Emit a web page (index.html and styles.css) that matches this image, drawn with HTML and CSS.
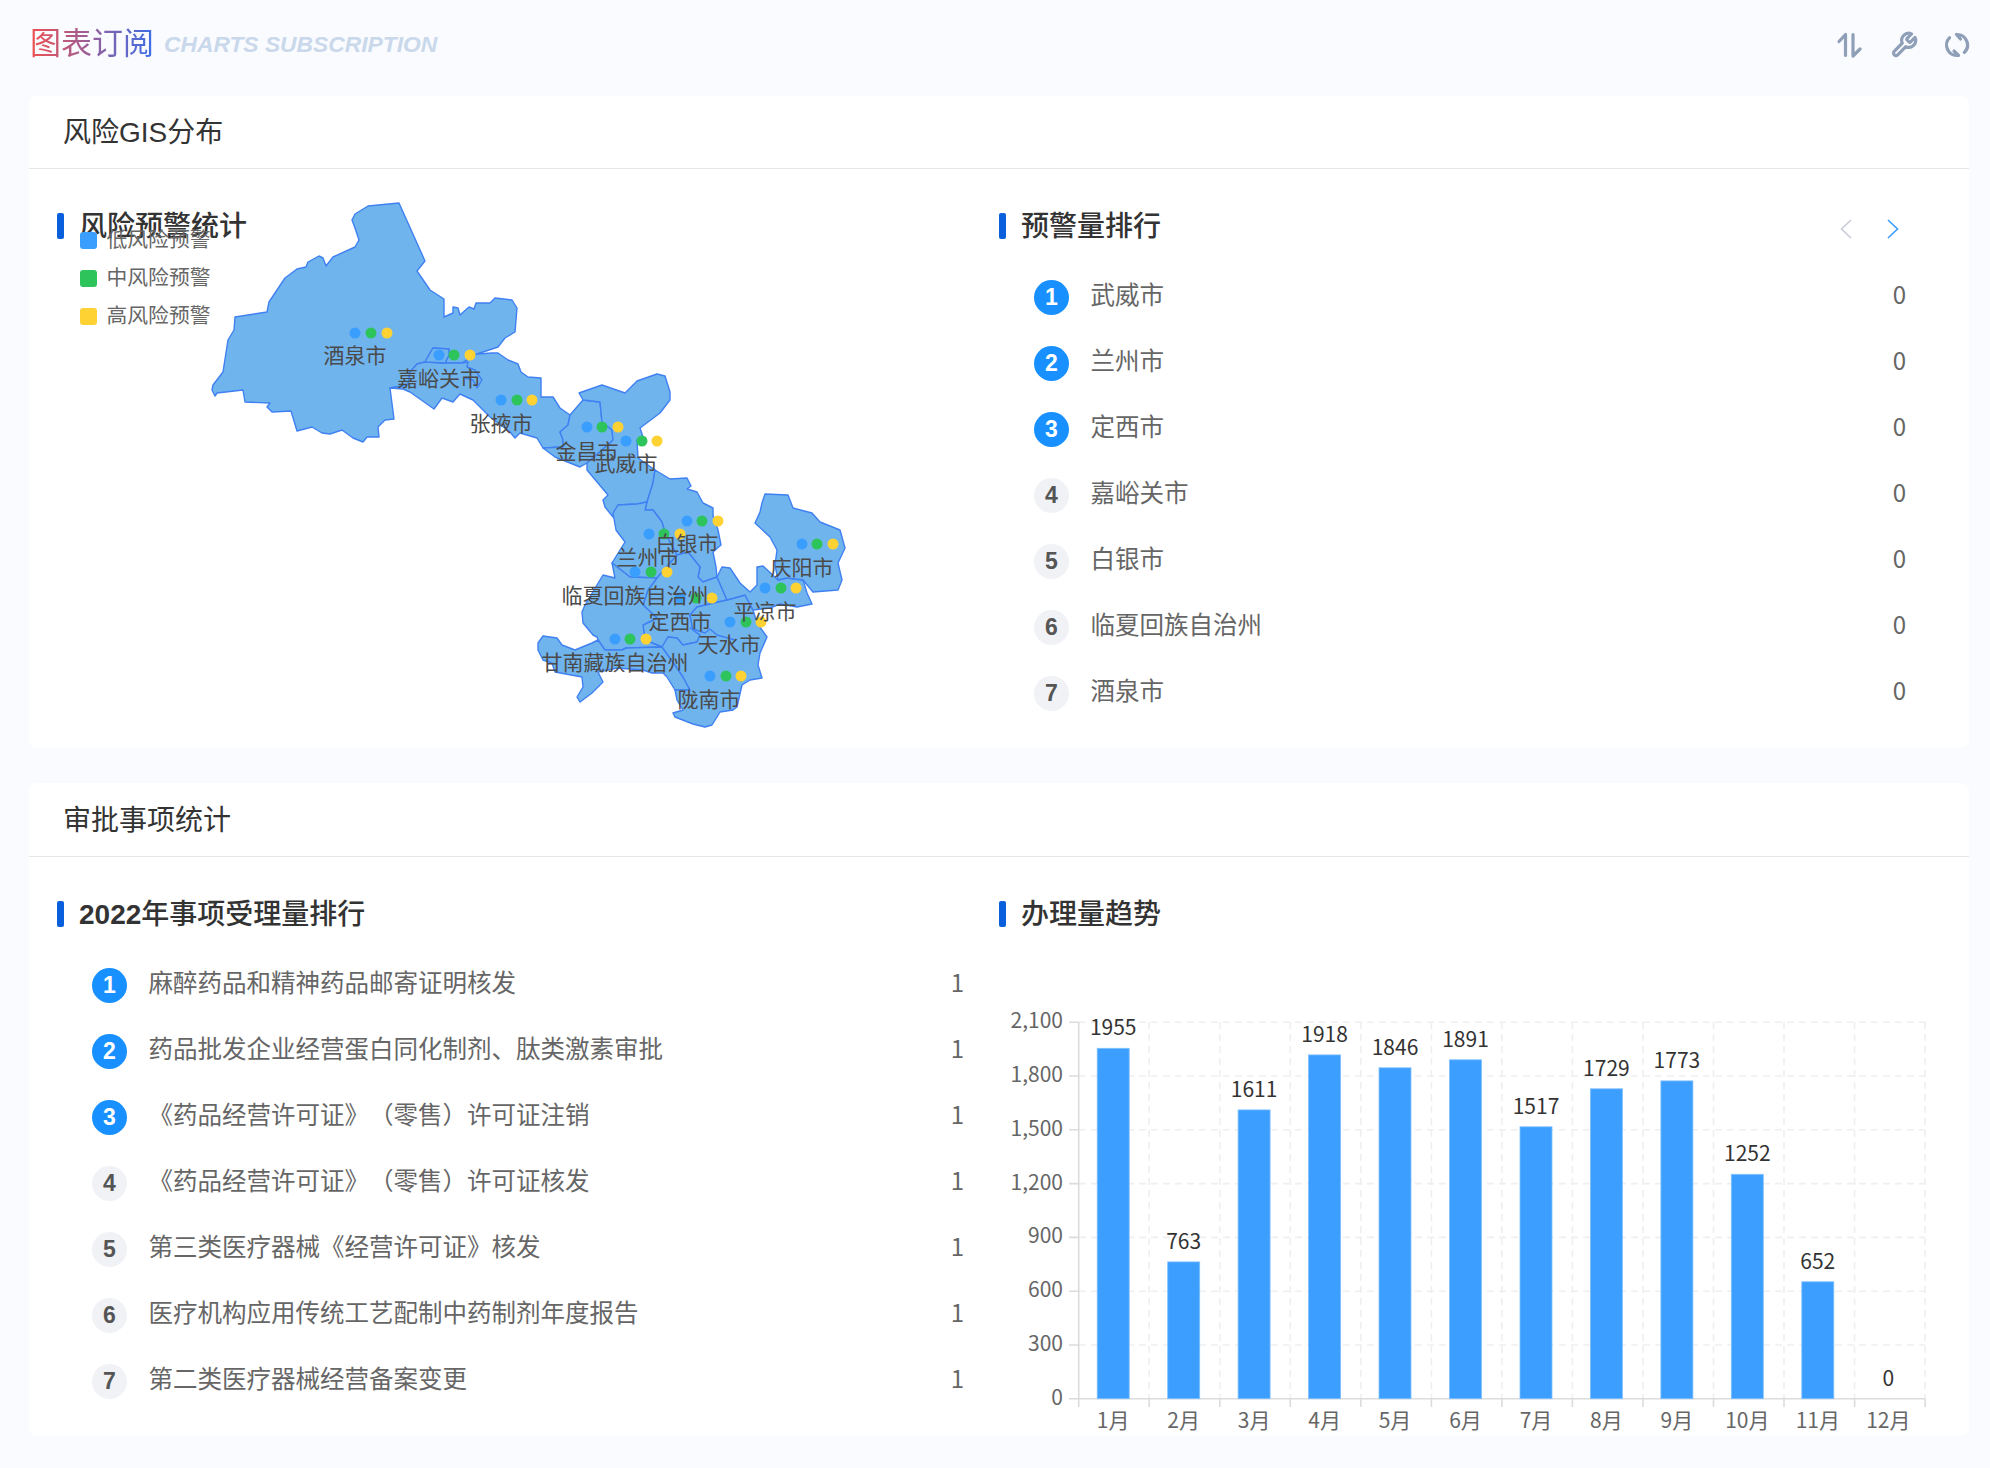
FILE: index.html
```html
<!DOCTYPE html>
<html lang="zh-CN">
<head>
<meta charset="utf-8">
<title>图表订阅</title>
<link rel="stylesheet" href="styles.css">
</head>
<body>
<div class="page">
  <header class="topbar">
    <div class="brand">
      <h1 class="brand-cn">图表订阅</h1>
      <span class="brand-en">CHARTS SUBSCRIPTION</span>
    </div>
    <div class="tools">
      <svg class="tool" viewBox="0 0 26 26"><path d="M3 9.5 L9.5 2.5 V23.5"/><path d="M24 17 L17 24 V2.5"/></svg>
      <svg class="tool tool-wrench" viewBox="0 0 24 24"><path d="M14.7 6.3a1 1 0 0 0 0 1.4l1.6 1.6a1 1 0 0 0 1.4 0l3.77-3.77a6 6 0 0 1-7.94 7.94l-6.91 6.91a2.12 2.12 0 0 1-3-3l6.91-6.91a6 6 0 0 1 7.94-7.94l-3.76 3.76z"/></svg>
      <svg class="tool" viewBox="0 0 26 26"><path d="M12.5 2.5A10.5 10.5 0 0 1 20.4 20.4M12.5 2.5L16.5 7"/><path d="M14.5 23.4A10.5 10.5 0 0 1 5.6 5.6M14.5 23.4L10 19"/></svg>
    </div>
  </header>

  <section class="card">
    <h2 class="card-head">风险GIS分布</h2>
    <div class="card-body">
      <div class="col">
        <div class="sec-title"><i class="bar"></i><span>风险预警统计</span></div>
        <svg class="map" viewBox="57 169 942 579">
          <g class="regions">
            <polygon points="399,203 425,261 417,271 430,290 444,299 444,317 453,313 453,307 458,308 460,315 469,307 474,309 476,303 490,303 495,298 512,300 517,308 515,332 505,338 498,347 477,354 462,363 445,363 449,355 449,349 433,348 430,353 425,362 417,364 410,372 408,385 390,388 394,419 385,420 378,427 379,437 367,437 363,442 353,438 342,430 330,434 322,433 312,427 297,431 291,411 272,412 267,407 270,403 245,402 243,390 217,393 215,396 212,390 213,385 223,372 228,340 234,330 235,317 267,312 269,302 285,278 297,269 306,267 308,262 319,256 323,258 326,266 333,257 355,247 359,240 355,228 352,220 355,214 368,206"/>
            <polygon points="477,354 492,353 498,353 508,360 518,364 521,372 528,377 541,378 541,397 553,397 560,408 570,415 568,425 560,432 563,440 563,447 543,448 537,438 520,433 515,438 510,432 490,417 473,400 460,394 453,402 442,398 434,409 410,392 403,389 390,388 408,385 410,372 417,364 425,362 445,363 462,363"/>
            <polygon points="433,348 449,349 449,355 445,363 425,362 430,353"/>
            <polygon points="570,415 583,400 600,402 602,422 612,430 613,440 610,443 587,463 580,467 555,457 543,448 563,447 563,440 560,432 568,425"/>
            <polygon points="579,393 602,385 625,393 637,381 657,374 665,376 670,392 670,400 660,413 640,428 643,437 637,440 638,458 655,470 653,483 647,502 637,504 618,505 613,517 605,507 603,500 608,495 587,470 587,463 610,443 613,440 612,430 602,422 600,402 583,400"/>
            <polygon points="655,470 670,479 687,478 691,486 687,489 697,492 703,503 713,508 713,515 718,530 721,545 713,552 716,567 717,577 703,582 698,577 700,567 688,552 677,555 665,533 662,522 653,510 645,510 647,502 653,483"/>
            <polygon points="618,505 637,504 647,502 645,510 653,510 662,522 665,533 677,555 657,578 630,577 612,563 625,542 616,530 613,513"/>
            <polygon points="677,555 688,552 700,567 698,577 703,582 717,577 727,600 697,607 690,615 693,630 700,635 697,642 683,645 677,638 668,637 662,647 645,640 643,625 657,618 643,605 648,590 657,578"/>
            <polygon points="612,563 630,577 657,578 648,590 643,605 657,618 643,625 645,640 662,647 626,648 622,650 605,650 598,640 597,637 593,635 583,623 582,612 585,605 603,575 615,578"/>
            <polygon points="538,643 543,636 557,638 562,645 575,650 592,643 598,640 605,650 622,650 626,648 662,647 675,665 683,677 690,690 675,690 667,677 663,673 652,673 643,670 617,668 598,672 603,682 592,693 580,702 577,697 583,687 582,677 555,672 552,663 543,660 538,650"/>
            <polygon points="697,607 727,600 745,595 753,610 757,623 767,637 760,653 758,665 762,678 750,680 742,685 737,707 733,710 720,712 717,717 712,725 705,727 693,724 675,717 673,713 683,710 677,700 675,690 690,690 683,677 675,665 662,647 668,637 677,638 683,645 697,642 700,635 693,630 690,615"/>
            <polygon points="717,577 722,567 730,568 740,583 750,592 757,585 757,567 763,566 778,580 787,578 803,580 807,593 812,604 797,607 780,604 770,608 753,610 745,595 727,600"/>
            <polygon points="765,494 788,495 793,508 812,513 820,522 840,530 845,548 838,563 842,580 838,590 813,592 803,580 787,578 778,580 775,565 777,550 770,537 755,523 760,512 762,503"/>
            <polyline class="inner" points="462,363 468,362 467,367 475,370 482,380 477,388 473,380 465,378"/>
            <polyline class="inner" points="690,628 705,633 710,629 717,635 735,640"/>
          </g>
          <g class="dots-low">
            <circle cx="355" cy="333" r="5.5"/><circle cx="439" cy="355" r="5.5"/><circle cx="501" cy="400" r="5.5"/><circle cx="587" cy="427" r="5.5"/><circle cx="626" cy="441" r="5.5"/><circle cx="687" cy="521" r="5.5"/><circle cx="649" cy="534" r="5.5"/><circle cx="635" cy="572" r="5.5"/><circle cx="680" cy="598" r="5.5"/><circle cx="802" cy="544" r="5.5"/><circle cx="765" cy="588" r="5.5"/><circle cx="730" cy="622" r="5.5"/><circle cx="615" cy="639" r="5.5"/><circle cx="710" cy="676" r="5.5"/>
          </g>
          <g class="dots-mid">
            <circle cx="371" cy="333" r="5.5"/><circle cx="454" cy="355" r="5.5"/><circle cx="517" cy="400" r="5.5"/><circle cx="602" cy="427" r="5.5"/><circle cx="642" cy="441" r="5.5"/><circle cx="702" cy="521" r="5.5"/><circle cx="664" cy="534" r="5.5"/><circle cx="651" cy="572" r="5.5"/><circle cx="696" cy="598" r="5.5"/><circle cx="817" cy="544" r="5.5"/><circle cx="781" cy="588" r="5.5"/><circle cx="746" cy="622" r="5.5"/><circle cx="630" cy="639" r="5.5"/><circle cx="726" cy="676" r="5.5"/>
          </g>
          <g class="dots-high">
            <circle cx="387" cy="333" r="5.5"/><circle cx="470" cy="355" r="5.5"/><circle cx="532" cy="400" r="5.5"/><circle cx="618" cy="427" r="5.5"/><circle cx="657" cy="441" r="5.5"/><circle cx="718" cy="521" r="5.5"/><circle cx="680" cy="534" r="5.5"/><circle cx="667" cy="572" r="5.5"/><circle cx="712" cy="598" r="5.5"/><circle cx="833" cy="544" r="5.5"/><circle cx="796" cy="588" r="5.5"/><circle cx="761" cy="622" r="5.5"/><circle cx="646" cy="639" r="5.5"/><circle cx="741" cy="676" r="5.5"/>
          </g>
          <g class="map-labels">
            <text x="355" y="362.5">酒泉市</text>
            <text x="439" y="385.5">嘉峪关市</text>
            <text x="501" y="430.5">张掖市</text>
            <text x="587" y="458.5">金昌市</text>
            <text x="626" y="470.5">武威市</text>
            <text x="687" y="550.5">白银市</text>
            <text x="648" y="564.5">兰州市</text>
            <text x="635" y="602.5">临夏回族自治州</text>
            <text x="680" y="628.5">定西市</text>
            <text x="802" y="574.5">庆阳市</text>
            <text x="765" y="618.5">平凉市</text>
            <text x="729" y="651.5">天水市</text>
            <text x="615" y="669.5">甘南藏族自治州</text>
            <text x="709" y="706.5">陇南市</text>
          </g>
        </svg>
        <ul class="legend">
          <li><i class="swatch swatch-low"></i><span>低风险预警</span></li>
          <li><i class="swatch swatch-mid"></i><span>中风险预警</span></li>
          <li><i class="swatch swatch-high"></i><span>高风险预警</span></li>
        </ul>
      </div>
      <div class="col">
        <div class="sec-title"><i class="bar"></i><span>预警量排行</span>
          <div class="pager">
            <svg class="chev chev-off" viewBox="0 0 12 20"><path d="M11 1 L1.5 10 L11 19"/></svg>
            <svg class="chev chev-on" viewBox="0 0 12 20"><path d="M1 1 L10.5 10 L1 19"/></svg>
          </div>
        </div>
        <ol class="rank">
          <li><b class="num top">1</b><span class="name">武威市</span><span class="val">0</span></li>
          <li><b class="num top">2</b><span class="name">兰州市</span><span class="val">0</span></li>
          <li><b class="num top">3</b><span class="name">定西市</span><span class="val">0</span></li>
          <li><b class="num">4</b><span class="name">嘉峪关市</span><span class="val">0</span></li>
          <li><b class="num">5</b><span class="name">白银市</span><span class="val">0</span></li>
          <li><b class="num">6</b><span class="name">临夏回族自治州</span><span class="val">0</span></li>
          <li><b class="num">7</b><span class="name">酒泉市</span><span class="val">0</span></li>
        </ol>
      </div>
    </div>
  </section>

  <section class="card card-second">
    <h2 class="card-head">审批事项统计</h2>
    <div class="card-body">
      <div class="col">
        <div class="sec-title"><i class="bar"></i><span><b class="year">2022</b>年事项受理量排行</span></div>
        <ol class="rank">
          <li><b class="num top">1</b><span class="name">麻醉药品和精神药品邮寄证明核发</span><span class="val">1</span></li>
          <li><b class="num top">2</b><span class="name">药品批发企业经营蛋白同化制剂、肽类激素审批</span><span class="val">1</span></li>
          <li><b class="num top">3</b><span class="name">《药品经营许可证》（零售）许可证注销</span><span class="val">1</span></li>
          <li><b class="num">4</b><span class="name">《药品经营许可证》（零售）许可证核发</span><span class="val">1</span></li>
          <li><b class="num">5</b><span class="name">第三类医疗器械《经营许可证》核发</span><span class="val">1</span></li>
          <li><b class="num">6</b><span class="name">医疗机构应用传统工艺配制中药制剂年度报告</span><span class="val">1</span></li>
          <li><b class="num">7</b><span class="name">第二类医疗器械经营备案变更</span><span class="val">1</span></li>
        </ol>
      </div>
      <div class="col">
        <div class="sec-title"><i class="bar"></i><span>办理量趋势</span></div>
        <svg class="chart" viewBox="999 952 942 462">
          <g class="grid">
            <path d="M1079 1022.3H1925M1079 1076H1925M1079 1129.8H1925M1079 1183.6H1925M1079 1237.4H1925M1079 1291.2H1925M1079 1345H1925"/>
            <path d="M1149.2 1022V1399M1219.8 1022V1399M1290.3 1022V1399M1360.8 1022V1399M1431.4 1022V1399M1501.9 1022V1399M1572.4 1022V1399M1643 1022V1399M1713.5 1022V1399M1784 1022V1399M1854.6 1022V1399M1925.1 1022V1399"/>
          </g>
          <path class="axis" d="M1078.7 1022V1407M1078.7 1398.7H1925.1M1069 1022.3H1079M1069 1076H1079M1069 1129.8H1079M1069 1183.6H1079M1069 1237.4H1079M1069 1291.2H1079M1069 1345H1079M1069 1398.7H1079M1149.2 1399V1407M1219.8 1399V1407M1290.3 1399V1407M1360.8 1399V1407M1431.4 1399V1407M1501.9 1399V1407M1572.4 1399V1407M1643 1399V1407M1713.5 1399V1407M1784 1399V1407M1854.6 1399V1407M1925.1 1399V1407"/>
          <g class="bars">
            <rect x="1097.2" y="1048.3" width="32" height="350.4"/>
            <rect x="1167.7" y="1261.9" width="32" height="136.8"/>
            <rect x="1238.1" y="1109.9" width="32" height="288.8"/>
            <rect x="1308.6" y="1054.9" width="32" height="343.8"/>
            <rect x="1379" y="1067.8" width="32" height="330.9"/>
            <rect x="1449.5" y="1059.8" width="32" height="338.9"/>
            <rect x="1520" y="1126.8" width="32" height="271.9"/>
            <rect x="1590.4" y="1088.8" width="32" height="309.9"/>
            <rect x="1660.9" y="1080.9" width="32" height="317.8"/>
            <rect x="1731.3" y="1174.3" width="32" height="224.4"/>
            <rect x="1801.8" y="1281.8" width="32" height="116.9"/>
          </g>
          <g class="y-labels">
            <text x="1063" y="1028.3">2,100</text>
            <text x="1063" y="1082">1,800</text>
            <text x="1063" y="1135.8">1,500</text>
            <text x="1063" y="1189.6">1,200</text>
            <text x="1063" y="1243.4">900</text>
            <text x="1063" y="1297.2">600</text>
            <text x="1063" y="1351">300</text>
            <text x="1063" y="1404.7">0</text>
          </g>
          <g class="x-labels">
            <text x="1113.2" y="1428">1月</text><text x="1183.7" y="1428">2月</text><text x="1254.1" y="1428">3月</text><text x="1324.6" y="1428">4月</text><text x="1395" y="1428">5月</text><text x="1465.5" y="1428">6月</text><text x="1536" y="1428">7月</text><text x="1606.4" y="1428">8月</text><text x="1676.9" y="1428">9月</text><text x="1747.3" y="1428">10月</text><text x="1817.8" y="1428">11月</text><text x="1888.3" y="1428">12月</text>
          </g>
          <g class="bar-labels">
            <text x="1113.2" y="1035.3">1955</text><text x="1183.7" y="1248.9">763</text><text x="1254.1" y="1096.9">1611</text><text x="1324.6" y="1041.9">1918</text><text x="1395" y="1054.8">1846</text><text x="1465.5" y="1046.8">1891</text><text x="1536" y="1113.8">1517</text><text x="1606.4" y="1075.8">1729</text><text x="1676.9" y="1067.9">1773</text><text x="1747.3" y="1161.3">1252</text><text x="1817.8" y="1268.8">652</text><text x="1888.3" y="1385.7">0</text>
          </g>
        </svg>
      </div>
    </div>
  </section>
</div>
</body>
</html>
```

FILE: styles.css
```css
* { box-sizing: border-box; }
html, body { margin: 0; padding: 0; }
body {
  background: #f9fbff;
  font-family: "Liberation Sans", "Noto Sans CJK SC", sans-serif;
  color: #333;
  width: 1990px;
  height: 1468px;
  overflow: hidden;
  text-spacing-trim: space-all;
}
.page { padding: 0 21px 0 29px; }

.topbar {
  height: 96px;
  display: flex;
  align-items: center;
  justify-content: space-between;
  padding: 0 0 6px 1px;
  margin-right: -1px;
}
.brand { display: flex; align-items: center; gap: 10px; margin-top: -2px; }
.brand-cn {
  margin: 0;
  font-size: 31px;
  font-weight: 400;
  line-height: 40px;
  background: linear-gradient(90deg, #f05050, #3a6ee6);
  -webkit-background-clip: text;
  background-clip: text;
  color: transparent;
}
.brand-en {
  font-size: 22.8px;
  font-weight: 700;
  font-style: italic;
  color: #c9d8ea;
}
.tools { display: flex; gap: 28px; align-items: center; }
.tool { width: 26px; height: 26px; fill: none; stroke: #8f9fb8; stroke-width: 3.2; stroke-linecap: round; stroke-linejoin: round; }
.tool-wrench { stroke-width: 2.7; width: 28px; height: 28px; margin-right: -2px; }

.card { background: #fff; border-radius: 8px; }
.card-second { margin-top: 35px; }
.card-head {
  margin: 0;
  height: 73px;
  line-height: 73px;
  padding-left: 34px;
  font-size: 28px;
  font-weight: 400;
  color: #333;
  border-bottom: 1px solid #e6e6e6;
}
.card-second .card-head { height: 74px; line-height: 76px; }
.card-body {
  display: grid;
  grid-template-columns: 942px 942px;
  padding: 44px 28px 22px;
}
.col { position: relative; }

.sec-title {
  height: 26px;
  display: flex;
  align-items: center;
  gap: 15px;
  font-size: 28px;
  font-weight: 500;
  color: #333;
  position: relative;
  z-index: 1;
}
.sec-title span { white-space: nowrap; margin-top: -5px; }
.year { font-weight: 700; }
.bar { width: 7px; height: 26px; border-radius: 2px; background: #0a5fdc; flex: none; }

.pager { position: absolute; left: 841px; top: 6px; display: flex; gap: 35px; }
.chev { width: 12px; height: 20px; fill: none; stroke-width: 1.6; display: block; }
.chev-off { stroke: #c8ccd4; }
.chev-on { stroke: #3a9cff; }

.rank { list-style: none; margin: 25px 0 0; padding: 0 35px 0 35px; }
.rank li { height: 66px; display: flex; align-items: center; }
.num {
  width: 35px;
  height: 35px;
  border-radius: 50%;
  background: #f0f2f5;
  color: #555;
  font-size: 23px;
  font-weight: 700;
  display: flex;
  align-items: center;
  justify-content: center;
  margin-right: 21.5px;
  flex: none;
}
.num.top { background: #1890ff; color: #fff; }
.name { flex: 1; font-size: 24.5px; color: #666; white-space: nowrap; margin-top: -7px; }
.val { font-size: 24px; color: #666; font-family: "Noto Sans CJK SC", sans-serif; margin-top: -7px; }

.map {
  position: absolute;
  left: 0;
  top: -44px;
  width: 942px;
  height: 579px;
}
.regions polygon, .regions polyline {
  fill: #70b4ed;
  stroke: #3f80f2;
  stroke-width: 1.4;
  stroke-linejoin: round;
}
.regions .inner { fill: none; }
.dots-low circle { fill: #3a9eff; }
.dots-mid circle { fill: #2ec45c; }
.dots-high circle { fill: #ffd233; }
.map-labels text {
  font-family: "Noto Sans CJK SC", sans-serif;
  font-size: 21px;
  fill: #4a4a4a;
  text-anchor: middle;
}

.legend {
  position: absolute;
  left: 23px;
  top: 8px;
  margin: 0;
  padding: 0;
  list-style: none;
  z-index: 2;
  font-size: 20.8px;
  color: #666;
}
.legend li { height: 38px; display: flex; align-items: center; gap: 9.5px; white-space: nowrap; }
.legend span { margin-top: -4px; }
.swatch { width: 17px; height: 17px; border-radius: 3px; flex: none; }
.swatch-low { background: #3a9eff; }
.swatch-mid { background: #2ec45c; }
.swatch-high { background: #ffd233; }

.chart { display: block; width: 942px; height: 462px; margin-top: 25px; overflow: visible; }
.grid path { fill: none; stroke: #efefef; stroke-width: 1.6; stroke-dasharray: 7 5; }
.axis { fill: none; stroke: #dcdcdc; stroke-width: 1.6; }
.bars rect { fill: #3c9eff; stroke: #7fc0ff; stroke-width: .8; }
.chart text { font-family: "Noto Sans CJK SC", sans-serif; font-size: 21px; }
.y-labels text { fill: #666; text-anchor: end; }
.x-labels text { fill: #666; text-anchor: middle; }
.bar-labels text { fill: #333; text-anchor: middle; }
```
